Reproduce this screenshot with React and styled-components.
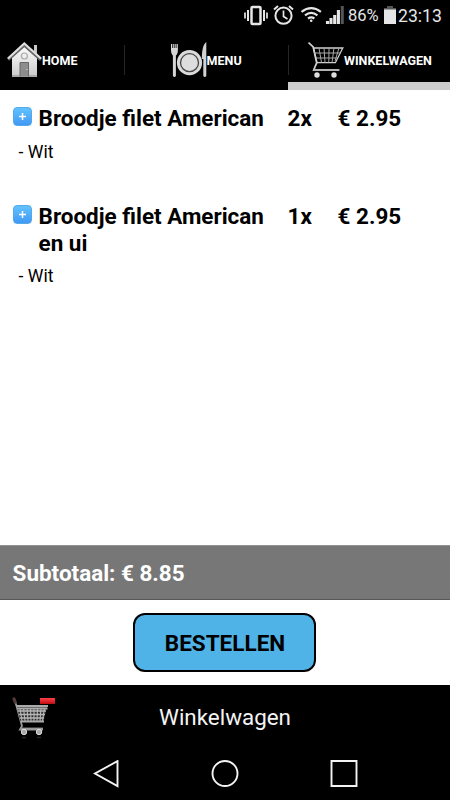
import React from "react";
import styled, { createGlobalStyle } from "styled-components";

const GlobalStyle = createGlobalStyle`
  * { box-sizing: border-box; }
  body { margin: 0; background: #fff; font-family: Roboto, sans-serif; }
  svg { display: block; flex: none; }
`;

const Screen = styled.div`
  width: 450px;
  height: 800px;
  display: flex;
  flex-direction: column;
  overflow: hidden;
  background: #fff;
  color: #000;
`;

const StatusBar = styled.div`
  height: 32px;
  flex: none;
  display: flex;
  justify-content: flex-end;
  padding-right: 9px;
  background: #000;
  color: #e6e6e6;
`;

const StatusText = styled.span`
  font-size: ${(p) => p.$size}px;
  width: ${(p) => p.$width}px;
  line-height: 32px;
  white-space: nowrap;
`;

const Tabs = styled.nav`
  height: 58px;
  flex: none;
  display: grid;
  grid-template-columns: 124px 164px 162px;
  background: #000;
`;

const Tab = styled.div`
  display: flex;
  align-items: center;
  padding-left: ${(p) => p.$indent}px;
  border-bottom: 8px solid ${(p) => (p.$active ? "#ccc" : "#000")};
  background: ${(p) =>
    p.$divided ? "linear-gradient(#262626, #262626) 0 13px / 1px 30px no-repeat" : "none"};
`;

const TabLabel = styled.span`
  padding-top: 7px;
  color: #fff;
  font-size: 12.5px;
  font-weight: 700;
  line-height: 15px;
  white-space: nowrap;
`;

const Cart = styled.main`
  flex: 1;
  padding: 15px 13px 0;
`;

const CartItem = styled.section`
  margin-bottom: 40.4px;
`;

const ItemRow = styled.div`
  display: grid;
  grid-template-columns: 25.6px 249px 50px auto;
  font-size: 22.45px;
  font-weight: 700;
  line-height: 26.6px;
`;

const AddButton = styled.button`
  width: 19px;
  height: 19px;
  margin: 2px 0 0;
  padding: 0;
  border: 1px solid #52aae8;
  border-radius: 4px;
  background: linear-gradient(#61c3ff, #4298f4);
  display: flex;
  align-items: center;
  justify-content: center;
`;

const ItemName = styled.span`
  width: 240px;
`;

const ItemOption = styled.div`
  padding: 9px 0 0 5.6px;
  font-size: 17.6px;
  line-height: 22px;
`;

const Subtotal = styled.div`
  height: 55px;
  flex: none;
  padding-left: 12.6px;
  border-top: 1px solid #939393;
  border-bottom: 1px solid #585858;
  background: #777;
  color: #fff;
  font-size: 22.45px;
  font-weight: 700;
  line-height: 54px;
`;

const OrderArea = styled.div`
  height: 85px;
  flex: none;
  display: flex;
  justify-content: center;
  align-items: flex-start;
  padding: 13px 1px 0 0;
`;

const OrderButton = styled.button`
  width: 183px;
  height: 59px;
  padding: 0 0 0 1px;
  border: 2px solid #000;
  border-radius: 12px;
  background: #50b3e7;
  color: #000;
  font: 700 22.5px Roboto, sans-serif;
`;

const Footer = styled.footer`
  height: 60px;
  flex: none;
  display: grid;
  grid-template-columns: 56px 1fr 56px;
  padding-top: 10px;
  background: #000;
  color: #f4f4f4;
`;

const FooterTitle = styled.span`
  font-size: 22.4px;
  line-height: 45px;
  text-align: center;
`;

const NavBar = styled.div`
  height: 55px;
  flex: none;
  display: grid;
  grid-template-columns: 28px 28px 28px;
  justify-content: center;
  column-gap: 91px;
  padding-top: 15px;
  background: #000;
`;

const StatusIcons = () => (
  <svg width="105" height="32" viewBox="243 0 105 32" fill="none" stroke="#e6e6e6">
    <rect x="251.5" y="7" width="9" height="17" rx="1" strokeWidth="2.5" />
    <path d="M248 10v11M264 10v11" strokeWidth="2" />
    <path d="M245 12.5v6M267 12.5v6" strokeWidth="1.7" />
    <circle cx="283.5" cy="15.7" r="8.1" strokeWidth="2" />
    <path d="M283.5 10.5v6l4 2.5" strokeWidth="1.7" />
    <path d="M274 9.5l4-3.5M293 9.5l-4-3.5" strokeWidth="2" />
    <path d="M301.5 11.8q9.7-7.5 19.4 0M305 15.3q6.2-5 12.4 0M308 18.5q3.2-2.2 6.4 0" strokeWidth="2.2" />
    <circle cx="311.2" cy="20.8" r="1.3" fill="#e6e6e6" stroke="none" />
    <path d="M327.5 24v-3M331 24v-6M334.7 24v-9M338.4 24v-14" strokeWidth="3.1" />
    <path d="M342.3 24V6" stroke="#555" strokeWidth="3" />
  </svg>
);

const BatteryIcon = () => (
  <svg width="15" height="32" viewBox="383 0 15 32">
    <path d="M384 9V8h3V6h6v2h3v2h-12z" fill="#555" />
    <rect x="384" y="9.5" width="12" height="14.5" fill="#e6e6e6" />
  </svg>
);

const HomeIcon = () => (
  <svg width="35" height="50" viewBox="7 32 35 50">
    <defs>
      <linearGradient id="wall" x2="0" y2="1">
        <stop stopColor="#fff" />
        <stop offset="1" stopColor="#c9c9c9" />
      </linearGradient>
    </defs>
    <path d="M34 45h3v10h-3z" fill="#c8c8c8" />
    <path d="M12 57l12.5-12L37 57v20H12z" fill="url(#wall)" />
    <path d="M12 76h25" stroke="#aaa" strokeWidth="2" />
    <path d="M8 59.6L24.3 45 41 59.6" fill="none" stroke="#666" strokeWidth="3.4" />
    <path d="M8 58.5L24.3 43.5 41 58.5" fill="none" stroke="#dedede" strokeWidth="2.2" />
    <circle cx="24.4" cy="56" r="3" fill="#eee" stroke="#aaa" strokeWidth="1.2" />
    <path d="M20 76.5V62.5h8.5v14" fill="#8d8d8d" stroke="#686868" />
    <circle cx="27" cy="69.5" r=".6" fill="#eee" />
  </svg>
);

const MenuIcon = () => (
  <svg width="36" height="50" viewBox="171 32 36 50">
    <path d="M171 44h1.3v4h.9v-4h1.2v4h.9v-4h1.2v4h.6v-4h.8v6c0 3-.8 4.5-2 5.5V76q-1.5 2-3 0V55.500c-1.3-1-1.9-3-1.9-5.500z" fill="#d5d5d5" />
    <circle cx="189.5" cy="62.700" r="12.6" fill="#dadada" />
    <circle cx="189.5" cy="62.700" r="9" fill="#ddd" stroke="#444" strokeWidth="1.3" />
    <path d="M206.300 42v34q-1.500 2-3 0V59h-1.400c0-8 .8-14 4.400-17z" fill="#d2d2d2" />
  </svg>
);

const CartIcon = () => (
  <svg width="36" height="50" viewBox="308 32 36 50" fill="none" stroke="#d0d0d0">
    <path d="M308.500 42.500l4.700 4.500 3.500 15.800-3 7H339" strokeWidth="1.700" />
    <path d="M313.500 48h29.300l-7.400 14.700H317z" strokeWidth="1.300" />
    <path d="M314.500 53h26M316 58h22M319 48l2.500 14.500M324 48l1 14.500M329 48l-.2 14.500M334 48l-2 14.500M339 48l-4 13" stroke="#a8a8a8" strokeWidth="1" />
    <path d="M313 70h26.500" stroke="#b4b4b4" strokeWidth="1.800" />
    <circle cx="317" cy="75" r="2.700" fill="#ddd" stroke="none" />
    <circle cx="334" cy="75" r="2.700" fill="#ddd" stroke="none" />
  </svg>
);

const PlusIcon = () => (
  <svg width="9" height="9" viewBox="0 0 9 9">
    <path d="M4.500 1v7M1 4.500h7" stroke="#fff" strokeWidth="1.500" />
  </svg>
);

const RemoveCartIcon = () => (
  <svg width="56" height="50" viewBox="0 695 56 50" fill="none">
    <defs>
      <linearGradient id="red" x2="0" y2="1">
        <stop stopColor="#ff4149" />
        <stop offset="1" stopColor="#bd0d12" />
      </linearGradient>
    </defs>
    <path d="M14.500 700l2 6 5.500 20-2 3.500H43" stroke="#999" strokeWidth="1.800" />
    <path d="M14 699l1.200 3" stroke="#513a3a" strokeWidth="3.300" strokeLinecap="round" />
    <path d="M17 707h30l-3.500 14.500h-23z" fill="#303030" />
    <path d="M18 711h28M19 714.500h26M20 718h24" stroke="#b8b8b8" strokeWidth="1.300" />
    <path d="M20 708l2 13M23.500 708l1.500 13M27 708l1 13M30.500 708l.5 13M34 708v13M37.500 708l-.5 13M41 708l-1 13M44.500 708l-2 13" stroke="#b8b8b8" strokeWidth="1.100" />
    <path d="M16 706h32M17 708.500h30.500M20.500 721.500h23.500" stroke="#aaa" strokeWidth="2" />
    <path d="M20 728.500h23" stroke="#999" strokeWidth="1.800" />
    <circle cx="24" cy="732" r="2.700" fill="#aaa" stroke="#ddd" />
    <circle cx="39" cy="732" r="2.700" fill="#aaa" stroke="#ddd" />
    <path d="M22 737.500h4M37 737.500h4" stroke="#242424" strokeWidth="1.500" />
    <rect x="40" y="698" width="15" height="6" fill="url(#red)" />
  </svg>
);

const navPaths = {
  back: "M25.500 1.100v25L3 13.500z",
  home: "M1.500 13.500a12.500 12.500 0 1 0 25 0a12.500 12.500 0 1 0-25 0",
  recent: "M1.500 1h25v25h-25z",
};

const NavIcon = ({ type }) => (
  <svg width="28" height="28" viewBox="0 0 28 28" fill="none" stroke="#f4f4f4" strokeWidth="1.900">
    <path d={navPaths[type]} />
  </svg>
);

const items = [
  { name: "Broodje filet American", count: "2x", price: "€ 2.95", option: "- Wit" },
  { name: "Broodje filet American en ui", count: "1x", price: "€ 2.95", option: "- Wit" },
];

export default function App() {
  return (
    <>
      <GlobalStyle />
      <Screen>
        <StatusBar>
          <StatusIcons />
          <StatusText $size={16.5} $width={35}>86%</StatusText>
          <BatteryIcon />
          <StatusText $size={17.6} $width={43}>23:13</StatusText>
        </StatusBar>
        <Tabs>
          <Tab $indent={7}><HomeIcon /><TabLabel>HOME</TabLabel></Tab>
          <Tab $indent={46.6} $divided><MenuIcon /><TabLabel>MENU</TabLabel></Tab>
          <Tab $indent={20} $divided $active><CartIcon /><TabLabel>WINKELWAGEN</TabLabel></Tab>
        </Tabs>
        <Cart>
          {items.map((item) => (
            <CartItem key={item.name}>
              <ItemRow>
                <AddButton aria-label="+"><PlusIcon /></AddButton>
                <ItemName>{item.name}</ItemName>
                <span>{item.count}</span>
                <span>{item.price}</span>
              </ItemRow>
              <ItemOption>{item.option}</ItemOption>
            </CartItem>
          ))}
        </Cart>
        <Subtotal>Subtotaal: € 8.85</Subtotal>
        <OrderArea><OrderButton>BESTELLEN</OrderButton></OrderArea>
        <Footer>
          <RemoveCartIcon />
          <FooterTitle>Winkelwagen</FooterTitle>
        </Footer>
        <NavBar>
          <NavIcon type="back" />
          <NavIcon type="home" />
          <NavIcon type="recent" />
        </NavBar>
      </Screen>
    </>
  );
}
